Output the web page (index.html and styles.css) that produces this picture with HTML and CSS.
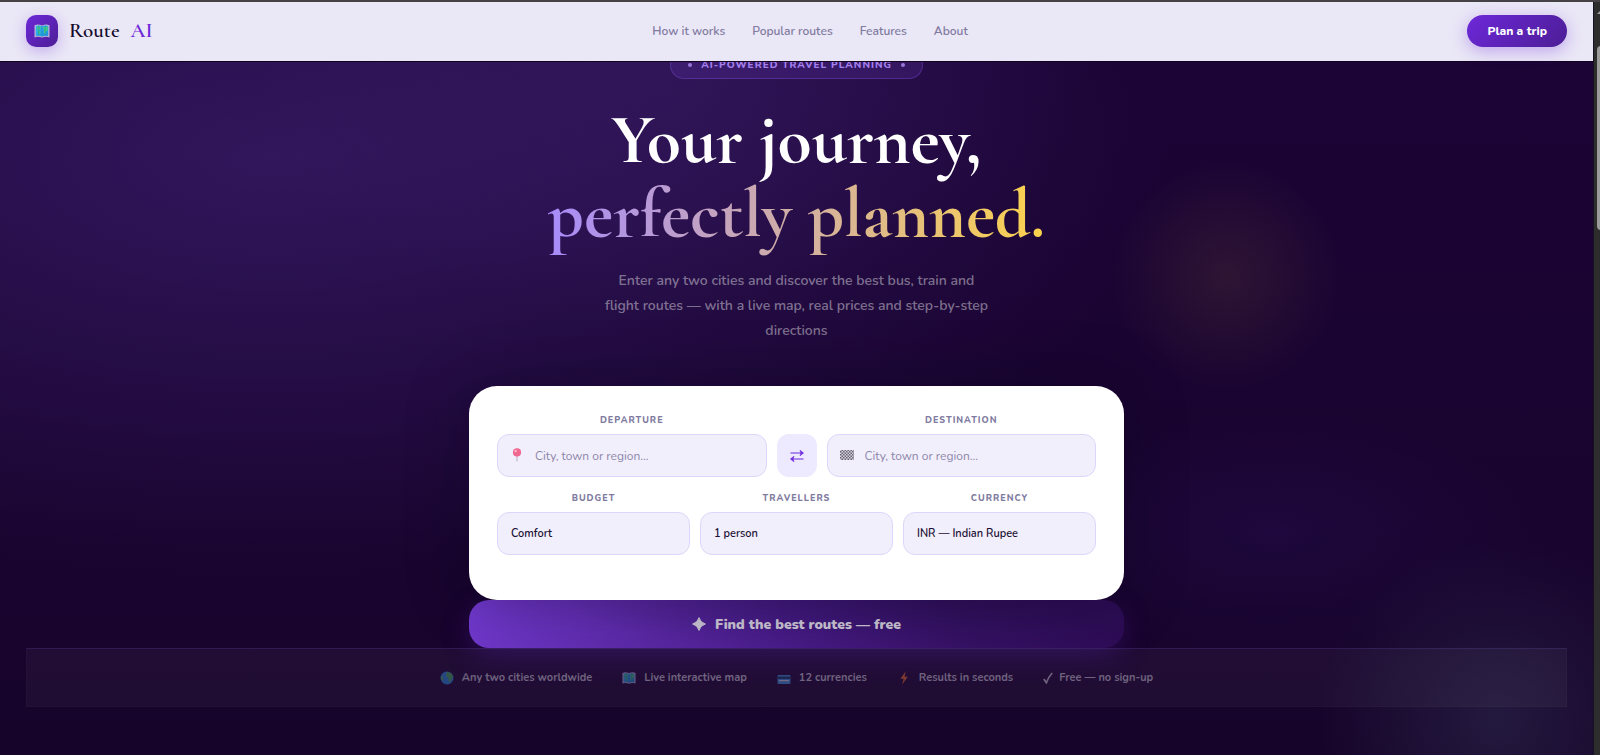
FILE: index.html
```html
<!DOCTYPE html>
<html lang="en">
<head>
    <meta charset="UTF-8">
    <meta name="viewport" content="width=device-width, initial-scale=1.0">
    <title>Route AI</title>
    <link rel="stylesheet" href="styles.css">
</head>
<body>
    <svg class="sprite" aria-hidden="true">
        <linearGradient id="sea" x1="0" y1="0" x2="1" y2="1">
            <stop offset="0" stop-color="#35b8f0"/>
            <stop offset="1" stop-color="#1c8fd8"/>
        </linearGradient>
        <symbol id="icon-map" viewBox="0 0 16 16">
            <path d="M0.5 2.2 Q4 0.8 8 2.4 Q12 0.8 15.5 2.2 V14.4 Q12 13 8 14.6 Q4 13 0.5 14.4 Z" fill="#b9b2d9"/>
            <path d="M1.8 3 Q5 2 8 3.3 Q11 2 14.2 3 V13 Q11 12.2 8 13.4 Q5 12.2 1.8 13 Z" fill="url(#sea)"/>
            <path d="M3 3.4 L6.8 3.5 L6.2 6 L4.6 7.4 L6.4 9 L5.4 12 L4.2 10 L3.4 6.6 Z M9 4 L13.6 3.4 V7.4 L12 8.6 L11.4 11.6 L9.8 9.6 L10 7 Z" fill="#3fce7e"/>
            <path d="M8 3 V13.6 M4.8 2.6 V12.4 M11.2 2.6 V12.4" stroke="#1e7fb8" stroke-width="0.5"/>
        </symbol>
    </svg>

    <div class="page">
        <header class="navbar">
            <a href="#" class="logo">
                <span class="logo-icon"><svg width="16" height="16"><use href="#icon-map"/></svg></span>
                <span>Route</span>
                <span class="logo-ai">AI</span>
            </a>
            <nav class="nav-links">
                <a href="#how">How it works</a>
                <a href="#routes">Popular routes</a>
                <a href="#features">Features</a>
                <a href="#about">About</a>
            </nav>
            <button type="button" class="nav-btn">Plan a trip</button>
        </header>

        <main class="hero">
            <div class="badge">AI-powered travel planning</div>
            <h1>Your journey,<br><span class="highlight">perfectly planned.</span></h1>
            <p class="subtitle">Enter any two cities and discover the best bus, train and flight routes — with a live map, real prices and step-by-step directions</p>

            <form class="search">
                <div class="card">
                    <div class="places">
                        <div class="field">
                            <label for="from">Departure</label>
                            <div class="input-wrap">
                                <svg class="input-icon" viewBox="0 0 14 14">
                                    <path d="M7 7 V13.4" stroke="#b9a9bd" stroke-width="1"/>
                                    <circle cx="7" cy="4.4" r="4.1" fill="#f0688f"/>
                                    <circle cx="5.6" cy="3" r="1.2" fill="#fbb6cb"/>
                                </svg>
                                <input type="text" id="from" placeholder="City, town or region...">
                            </div>
                        </div>
                        <button type="button" class="swap" aria-label="Swap cities">
                            <svg width="16" height="14" viewBox="0 0 16 14">
                                <path d="M1.5 4 H13 M3 10 H14.5" stroke="#6d28d9" stroke-width="1"/>
                                <path d="M11 1.2 L14.6 4 L11 6.8 L12 4 Z M5 7.2 L1.4 10 L5 12.8 L4 10 Z" fill="#6d28d9" stroke="#6d28d9" stroke-width="0.6"/>
                            </svg>
                        </button>
                        <div class="field">
                            <label for="to">Destination</label>
                            <div class="input-wrap">
                                <svg class="input-icon" viewBox="0 0 14 14">
                                    <defs>
                                        <pattern id="checks" width="3" height="3" patternUnits="userSpaceOnUse">
                                            <rect width="1.5" height="1.5" fill="#6b6675"/>
                                            <rect x="1.5" y="1.5" width="1.5" height="1.5" fill="#6b6675"/>
                                        </pattern>
                                    </defs>
                                    <rect y="2" width="14" height="10" fill="#d2cedb"/>
                                    <rect y="2" width="14" height="10" fill="url(#checks)"/>
                                </svg>
                                <input type="text" id="to" placeholder="City, town or region...">
                            </div>
                        </div>
                    </div>
                    <div class="options">
                        <div class="field">
                            <label for="budget">Budget</label>
                            <select id="budget">
                                <option>Comfort</option>
                            </select>
                        </div>
                        <div class="field">
                            <label for="travellers">Travellers</label>
                            <select id="travellers">
                                <option>1 person</option>
                            </select>
                        </div>
                        <div class="field">
                            <label for="currency">Currency</label>
                            <select id="currency">
                                <option>INR — Indian Rupee</option>
                            </select>
                        </div>
                    </div>
                </div>
                <button type="submit" class="search-btn">
                    <svg width="14" height="14" viewBox="0 0 14 14"><path d="M7 0.6 Q8.4 5.6 13.4 7 Q8.4 8.4 7 13.4 Q5.6 8.4 0.6 7 Q5.6 5.6 7 0.6 Z" fill="#cbc5d4" stroke="#cbc5d4" stroke-linejoin="round"/></svg>
                    Find the best routes — free
                </button>
            </form>

            <ul class="trust">
                <li>
                    <svg width="14" height="14" viewBox="0 0 14 14"><circle cx="7" cy="7" r="6.5" fill="#2a8fe0"/><path d="M7 0.8 L11.5 2.4 L13 6 L11.4 8.4 L9.6 11.6 L8.4 9.2 L8.6 6.8 L6 5.6 L6.4 2.6 Z M1 5 L3.4 6.4 L3 9.4 L1.2 8.4 Z" fill="#4fae5c"/></svg>
                    Any two cities worldwide
                </li>
                <li>
                    <svg width="14" height="14"><use href="#icon-map"/></svg>
                    Live interactive map
                </li>
                <li>
                    <svg width="14" height="14" viewBox="0 0 14 14"><rect x="0.5" y="4" width="13" height="9" rx="1" fill="#3f9be0"/><path d="M0.5 5.6 H13.5 V7.8 H0.5 Z" fill="#173a66"/><path d="M2 9.6 H12" stroke="#d5dcec" stroke-width="1.2"/></svg>
                    12 currencies
                </li>
                <li>
                    <svg width="14" height="14" viewBox="0 0 14 14"><path d="M8.6 0.6 L3.4 7.8 L6.6 7.8 L5.2 13.4 L10.8 5.8 L7.6 5.8 Z" fill="#f0702c"/></svg>
                    Results in seconds
                </li>
                <li class="check">
                    <svg width="10" height="12" viewBox="0 0 10 12"><path d="M0.8 7 L3.4 10.8 Q5.4 5 9.2 1" fill="none" stroke="#cfc9d8" stroke-width="1.7"/></svg>
                    Free — no sign-up
                </li>
            </ul>
        </main>
    </div>
    <div class="scrollbar"><div class="scroll-arrow"></div><div class="scroll-thumb"></div></div>
</body>
</html>
```

FILE: styles.css
```css
* {
    box-sizing: border-box;
}
body {
    margin: 0;
    min-height: 100vh;
    display: grid;
    grid-template-columns: 1fr 7px;
    border-top: 2px solid #454145;
    background-color: #1b0432;
    font-family: Nunito, Lato, sans-serif;
    overflow: hidden;
}
button, input, select {
    font-family: inherit;
}
.sprite {
    position: absolute;
    width: 0;
    height: 0;
}
.page {
    display: flex;
    flex-direction: column;
}

/* Navbar */
.navbar {
    position: relative;
    z-index: 2;
    display: flex;
    align-items: center;
    justify-content: space-between;
    height: 59px;
    padding: 0 26px 2px;
    background-color: #eae7f6;
    box-shadow: 0 1px 0 #12021f;
}
.logo {
    display: flex;
    align-items: center;
    gap: 11px;
    font-family: "Cormorant Garamond", "Liberation Serif", serif;
    font-size: 21px;
    font-weight: 600;
    color: #140a2c;
    text-decoration: none;
}
.logo-icon {
    display: flex;
    align-items: center;
    justify-content: center;
    width: 32px;
    height: 32px;
    border-radius: 10px;
    background: linear-gradient(135deg, #6d28d9, #4c1d95);
    box-shadow: 0 4px 14px rgba(109, 40, 217, 0.3);
}
.logo-ai {
    color: #6d28d9;
}
.nav-links {
    display: flex;
    gap: 27px;
}
.nav-links a {
    font-size: 12px;
    font-weight: 600;
    color: #807a9f;
    text-decoration: none;
}
.nav-btn {
    height: 32px;
    padding: 0 20px;
    border: none;
    border-radius: 16px;
    background: linear-gradient(135deg, #6d28d9, #4c1d95);
    box-shadow: 0 4px 16px rgba(109, 40, 217, 0.35);
    color: #fff;
    font-size: 12px;
    font-weight: 800;
    cursor: pointer;
}

/* Hero */
.hero {
    flex: 1;
    display: flex;
    flex-direction: column;
    align-items: center;
    padding: 0 26px 48px;
    background:
        radial-gradient(circle 115px at 77% 31%, rgba(245, 190, 60, 0.09), transparent),
        radial-gradient(circle 180px at 94% 95%, rgba(70, 85, 115, 0.26), transparent),
        radial-gradient(ellipse 260px 120px at 80% 68%, rgba(60, 30, 140, 0.15), transparent),
        radial-gradient(ellipse 900px 420px at 17% 14%, rgba(76, 45, 140, 0.45), transparent),
        radial-gradient(ellipse 420px 260px at 42% 0%, rgba(76, 45, 130, 0.25), transparent),
        linear-gradient(#1c0436, #17042b);
}
.badge {
    display: flex;
    align-items: center;
    gap: 9px;
    height: 28px;
    margin-top: -10px;
    padding: 0 17px;
    border: 1px solid rgba(139, 92, 246, 0.3);
    border-radius: 14px;
    background-color: rgba(109, 60, 200, 0.2);
    color: #a480ee;
    font-size: 10px;
    font-weight: 800;
    letter-spacing: 1px;
    text-transform: uppercase;
}
.badge::before, .badge::after {
    content: "";
    width: 4px;
    height: 4px;
    border-radius: 50%;
    background-color: #9678d8;
}
h1 {
    margin: 24px 0 0;
    font-family: "Cormorant Garamond", "Liberation Serif", serif;
    font-size: 70px;
    font-weight: bold;
    line-height: 74px;
    text-align: center;
    color: #fff;
}
.highlight {
    background: linear-gradient(90deg, #a78bfa, #fcd34d);
    -webkit-background-clip: text;
    background-clip: text;
    color: transparent;
}
.subtitle {
    max-width: 386px;
    margin: 17px 0 43px;
    font-size: 14px;
    font-weight: 600;
    line-height: 25px;
    text-align: center;
    color: rgba(255, 255, 255, 0.43);
}

/* Search form */
.search {
    width: 100%;
    max-width: 655px;
}
.card {
    position: relative;
    z-index: 1;
    display: flex;
    flex-direction: column;
    gap: 14px;
    padding: 27px 28px 45px;
    border-radius: 28px;
    background-color: #fff;
    box-shadow: 0 0 60px rgba(10, 0, 25, 0.35);
}
.places {
    display: grid;
    grid-template-columns: 1fr 40px 1fr;
    align-items: end;
    gap: 10px;
}
.options {
    display: grid;
    grid-template-columns: repeat(3, 1fr);
    gap: 10px;
}
.field label {
    display: block;
    margin-bottom: 7px;
    color: #807a9f;
    font-size: 9px;
    font-weight: 800;
    line-height: 14px;
    letter-spacing: 1px;
    text-align: center;
    text-transform: uppercase;
}
.input-wrap {
    position: relative;
}
.input-icon {
    position: absolute;
    left: 13px;
    top: 14px;
    width: 14px;
    height: 14px;
}
.field input, .field select {
    display: block;
    width: 100%;
    height: 43px;
    padding: 0 13px;
    border: 1px solid #ddd6fa;
    border-radius: 12px;
    background-color: #f2effc;
    color: #1a1033;
    font-size: 11px;
    font-weight: 600;
    appearance: none;
}
.field input {
    padding-left: 37px;
    font-size: 12px;
    font-weight: 400;
}
.field input::placeholder {
    color: #8c86a9;
}
.swap {
    display: flex;
    align-items: center;
    justify-content: center;
    height: 43px;
    padding: 0;
    border: none;
    border-radius: 12px;
    background-color: #ede9fe;
    cursor: pointer;
}
.search-btn {
    display: flex;
    align-items: center;
    justify-content: center;
    gap: 9px;
    width: 100%;
    height: 48px;
    border: none;
    border-radius: 20px;
    background:
        radial-gradient(ellipse 60% 130% at 75% 0%, rgba(30, 12, 65, 0.4), transparent),
        linear-gradient(100deg, #7038cc, #5a28a4 28%, #4a1c8c 50%, #3a126a 75%, #2f0c58);
    box-shadow: 0 8px 28px rgba(91, 33, 182, 0.3);
    color: #cbc5d4;
    font-size: 14px;
    font-weight: 900;
    cursor: pointer;
}

/* Trust bar */
.trust {
    position: relative;
    display: flex;
    justify-content: center;
    gap: 30px;
    width: 100%;
    margin: 0;
    padding: 22px 0 21px;
    border: 1px solid rgba(255, 255, 255, 0.02);
    border-top-color: rgba(139, 110, 246, 0.14);
    background-color: rgba(255, 255, 255, 0.04);
    list-style: none;
}
.trust li {
    display: flex;
    align-items: center;
    gap: 8px;
    color: #6f627f;
    font-size: 11px;
    font-weight: 700;
    line-height: 14px;
}
.trust svg {
    opacity: 0.45;
}
.trust .check {
    gap: 6px;
}

/* Scrollbar */
.scrollbar {
    padding: 6px 0 0 3px;
    border-left: 1px solid #16101f;
    background-color: #2d2d2d;
    overflow: hidden;
}
.scroll-arrow {
    width: 12px;
    height: 6px;
    background-color: #a0a0a0;
    clip-path: polygon(50% 0, 100% 100%, 0 100%);
}
.scroll-thumb {
    width: 8px;
    height: 184px;
    margin-top: 32px;
    border-radius: 4px;
    background-color: #9c9c9c;
}
```
